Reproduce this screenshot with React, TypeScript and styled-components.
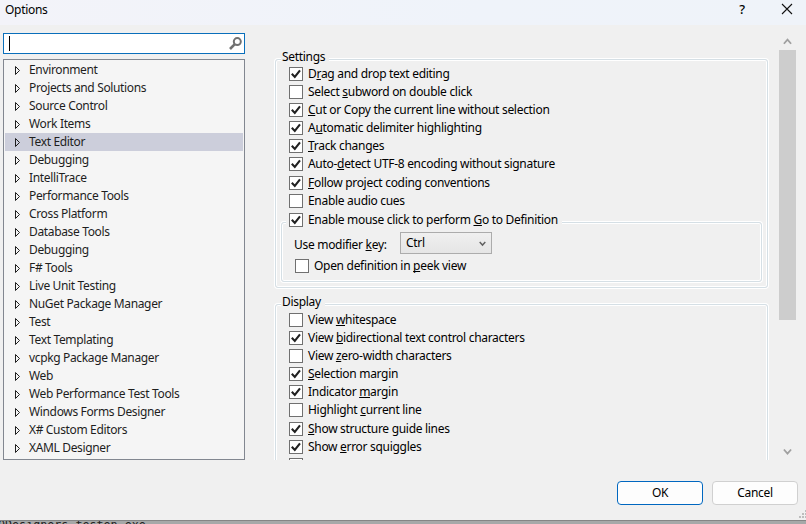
import React from "react";
import styled, { createGlobalStyle, css } from "styled-components";

const Global = createGlobalStyle`
  * { box-sizing: border-box; }
  html, body { margin: 0; padding: 0; overflow: hidden; }
  body { font-family: "Noto Sans", "Open Sans", sans-serif; font-size: 12px; letter-spacing: -0.3px; color: #000; }
  u { text-underline-offset: 1px; text-decoration-skip-ink: none; }
`;

const Screen = styled.div`
  width: 806px;
  height: 524px;
  display: flex;
  flex-direction: column;
  overflow: hidden;
  background: #f0f0f0;
`;

const TitleBar = styled.header`
  flex: 0 0 25px;
  display: flex;
  align-items: flex-start;
  padding-left: 5px;
  background: linear-gradient(90deg, #f3f3f9, #eff3fa 60%, #eff3f9);
`;

const Title = styled.div`
  flex: 1;
  line-height: 20px;
`;

const CloseIcon = styled.svg`
  display: block;
  width: 12px;
  height: 12px;
  margin: 3px 13px 0 0;
`;

const HelpMark = styled.div`
  width: 12px;
  margin-right: 33px;
  text-align: center;
  font-size: 13px;
  font-weight: 500;
  line-height: 19px;
`;

const Content = styled.div`
  flex: 0 0 435px;
  height: 435px;
  min-height: 0;
  display: flex;
  overflow: hidden;
`;

const Sidebar = styled.aside`
  width: 242px;
  margin: 8px 29px 0 3px;
`;

const SearchBox = styled.div`
  height: 21px;
  display: flex;
  align-items: center;
  justify-content: space-between;
  padding: 0 2px 0 5px;
  background: #fff;
  border: 1px solid #0a6fbb;
`;

const Caret = styled.div`
  width: 1px;
  height: 15px;
  background: #000;
`;

const Tree = styled.div`
  height: 401px;
  margin-top: 5px;
  padding: 1px;
  background: #f5f5f5;
  border: 1px solid #828790;
  letter-spacing: -0.35px;
`;

const TreeRow = styled.div<{ $selected: boolean }>`
  height: 18px;
  display: flex;
  align-items: center;
  gap: 9px;
  padding-left: 10px;
  color: #1e1e1e;
  background: ${(p) => (p.$selected ? "#cccedb" : "transparent")};
`;

const TreeArrow = styled.svg`
  width: 5px;
  height: 9px;
  margin-top: 1px;
  display: block;
  overflow: visible;
`;

const Text = styled.span`
  line-height: 16px;
  white-space: nowrap;
`;

const Pane = styled.main`
  width: 495px;
  height: 435px;
  padding-top: 25px;
  overflow: hidden;
`;

const groupFrame = css`
  border: 1px solid #d5dfe5;
  border-radius: 3px;
  box-shadow: 0 0 0 1px #fff, inset 0 0 0 1px #fff;
`;

const Group = styled.section<{ $gap: number }>`
  ${groupFrame}
  width: 493px;
  height: 229px;
  margin: 9px 0 ${(p) => p.$gap}px 1px;
  padding-left: 5px;
`;

const Legend = styled.h2`
  width: max-content;
  height: 16px;
  margin: -11px 0 0;
  padding: 0 4px 0 1px;
  font-size: inherit;
  font-weight: 400;
  line-height: 16px;
  background: #f0f0f0;
`;

const Check = styled.div<{ $before?: number; $left?: number }>`
  width: max-content;
  height: 14px;
  display: flex;
  align-items: flex-start;
  gap: 5px;
  margin: ${(p) => p.$before ?? 4}px 0 0 ${(p) => p.$left ?? 8}px;

  ${Text} {
    margin-top: -1px;
  }
`;

const CheckSquare = styled.svg`
  width: 14px;
  height: 14px;
  display: block;
`;

const SubGroup = styled.div`
  ${groupFrame}
  width: 481px;
  height: 60px;
  margin-top: 14px;
  padding-top: 0.1px;
`;

const SubHeading = styled.div`
  width: max-content;
  height: 14px;
  margin: -10px 0 0 4px;
  padding: 0 4px 0 3px;
  background: #f0f0f0;
`;

const SelectRow = styled.div`
  display: flex;
  align-items: center;
  margin: 5px 0 0 12px;
  height: 22px;
`;

const SelectLabel = styled.div`
  width: 106px;
  padding-top: 2px;
`;

const Select = styled.div`
  width: 92px;
  height: 22px;
  display: flex;
  align-items: center;
  justify-content: space-between;
  padding: 0 5px;
  background: linear-gradient(#f0f0f0, #e5e5e5);
  border: 1px solid #acacac;
`;

const ScrollBar = styled.div`
  width: 17px;
  height: 427px;
  margin: 8px 0 0 10px;
  display: flex;
  flex-direction: column;
  align-items: center;
`;

const Thumb = styled.div`
  width: 17px;
  height: 270px;
  background: #cdcdcd;
`;

const ScrollEnd = styled.div`
  height: 17px;
  display: flex;
  align-items: center;
`;

const ScrollSpace = styled.div`
  flex: 1;
`;

const Footer = styled.footer`
  flex: 0 0 60px;
  display: flex;
  justify-content: flex-end;
  align-items: flex-start;
  gap: 9px;
  padding: 21px 8px 0 0;
`;

const Button = styled.button<{ $primary?: boolean }>`
  width: 86px;
  height: 24px;
  padding: 0;
  font: inherit;
  letter-spacing: inherit;
  line-height: 20px;
  color: #000;
  background: #fdfdfd;
  border: 1px solid ${(p) => (p.$primary ? "#0067c0" : "#d0d0d0")};
  border-radius: 4px;
`;

const Grip = styled.svg`
  position: absolute;
  left: 799px;
  top: 510px;
  width: 7px;
  height: 8px;
`;

const Behind = styled.div`
  flex: 0 0 4px;
  height: 4px;
  overflow: hidden;
  background: #a6a8a8;
  border-top: 1px solid #858585;
`;

const BehindText = styled.div`
  margin: -3px 0 0 -2px;
  color: #222;
  font-family: "DejaVu Sans Mono", monospace;
  font-size: 11.7px;
  line-height: 14px;
  letter-spacing: 0;
  white-space: pre;
`;

const treeItems = [
  "Environment", "Projects and Solutions", "Source Control", "Work Items", "Text Editor",
  "Debugging", "IntelliTrace", "Performance Tools", "Cross Platform", "Database Tools",
  "Debugging", "F# Tools", "Live Unit Testing", "NuGet Package Manager", "Test",
  "Text Templating", "vcpkg Package Manager", "Web", "Web Performance Test Tools",
  "Windows Forms Designer", "X# Custom Editors", "XAML Designer",
];

type Option = { text: string; on?: boolean; before?: number };

const settings: Option[] = [
  { text: "D_rag and drop text editing", on: true, before: 2 },
  { text: "Select _subword on double click" },
  { text: "_Cut or Copy the current line without selection", on: true },
  { text: "A_utomatic delimiter highlighting", on: true },
  { text: "_Track changes", on: true },
  { text: "Auto-_detect UTF-8 encoding without signature", on: true },
  { text: "_Follow project coding conventions", on: true, before: 5 },
  { text: "Enable audio cues" },
];

const display: Option[] = [
  { text: "View _whitespace", before: 3 },
  { text: "View _bidirectional text control characters", on: true },
  { text: "View _zero-width characters" },
  { text: "_Selection margin", on: true },
  { text: "Indicator _margin", on: true },
  { text: "Highlight _current line" },
  { text: "_Show structure guide lines", on: true, before: 5 },
  { text: "Show _error squiggles", on: true },
  { text: "" },
];

/** Renders a label whose access key is marked by a preceding underscore. */
function AccessText({ text }: { text: string }) {
  const at = text.indexOf("_");
  if (at < 0) return <Text>{text}</Text>;
  return (
    <Text>
      {text.slice(0, at)}
      <u>{text[at + 1]}</u>
      {text.slice(at + 2)}
    </Text>
  );
}

function CheckOption({ text, on, before, left }: Option & { left?: number }) {
  return (
    <Check $before={before} $left={left}>
      <CheckSquare viewBox="0 0 14 14">
        <rect x=".5" y=".5" width="13" height="13" fill="#fff" stroke="#707070" />
        {on && <path d="M2.8 6.8 5.8 10 11 3.4" fill="none" stroke="#212121" strokeWidth="2.1" />}
      </CheckSquare>
      <AccessText text={text} />
    </Check>
  );
}

function Chevron({ up, size, color }: { up?: boolean; size: number; color: string }) {
  return (
    <svg width={size} height={size} viewBox="0 0 8 8">
      <path d={up ? "M.8 6 4 2.4 7.2 6" : "M.8 2.2 4 5.8 7.2 2.2"} fill="none" stroke={color} strokeWidth="1.6" />
    </svg>
  );
}

export default function App() {
  return (
    <Screen>
      <Global />
      <TitleBar>
        <Title><Text>Options</Text></Title>
        <HelpMark>?</HelpMark>
        <CloseIcon viewBox="0 0 12 12">
          <path d="M1 1 11 11M11 1 1 11" stroke="#111" strokeWidth="1.1" />
        </CloseIcon>
      </TitleBar>
      <Content>
        <Sidebar>
          <SearchBox>
            <Caret />
            <svg width="13" height="13" viewBox="0 0 13 13" fill="none" stroke="#717171">
              <circle cx="8.3" cy="4.6" r="3.5" strokeWidth="2" />
              <path d="M5.8 7.2 1 12" strokeWidth="2.6" />
            </svg>
          </SearchBox>
          <Tree>
            {treeItems.map((item, i) => (
              <TreeRow key={i} $selected={i === 4}>
                <TreeArrow viewBox="0 0 5 9">
                  <path d="M.5 .5v8l4-4z" fill="none" stroke="#1e1e1e" />
                </TreeArrow>
                <Text>{item}</Text>
              </TreeRow>
            ))}
          </Tree>
        </Sidebar>
        <Pane>
          <Group $gap={16}>
            <Legend>Settings</Legend>
            {settings.map((o) => <CheckOption key={o.text} {...o} />)}
            <SubGroup>
              <SubHeading>
                <CheckOption text="Enable mouse click to perform _Go to Definition" on before={0} left={0} />
              </SubHeading>
              <SelectRow>
                <SelectLabel><AccessText text="Use modifier _key:" /></SelectLabel>
                <Select>
                  <Text>Ctrl</Text>
                  <Chevron size={7} color="#606060" />
                </Select>
              </SelectRow>
              <CheckOption text="Open definition in _peek view" before={5} left={13} />
            </SubGroup>
          </Group>
          <Group $gap={0}>
            <Legend>Display</Legend>
            {display.map((o) => <CheckOption key={o.text} {...o} />)}
          </Group>
        </Pane>
        <ScrollBar>
          <ScrollEnd><Chevron up size={9} color="#a0a0a0" /></ScrollEnd>
          <Thumb />
          <ScrollSpace />
          <ScrollEnd><Chevron size={9} color="#a0a0a0" /></ScrollEnd>
        </ScrollBar>
      </Content>
      <Footer>
        <Button $primary>OK</Button>
        <Button>Cancel</Button>
      </Footer>
      <Behind><BehindText>QDesigners.testen.exe</BehindText></Behind>
      <Grip viewBox="0 0 7 8" fill="#bdbdbd">
        <path d="M6 0h1v2h-1zM3 3h2v2h-2zM6 3h1v2h-1zM0 6h2v2h-2zM3 6h2v2h-2zM6 6h1v2h-1z" />
      </Grip>
    </Screen>
  );
}
